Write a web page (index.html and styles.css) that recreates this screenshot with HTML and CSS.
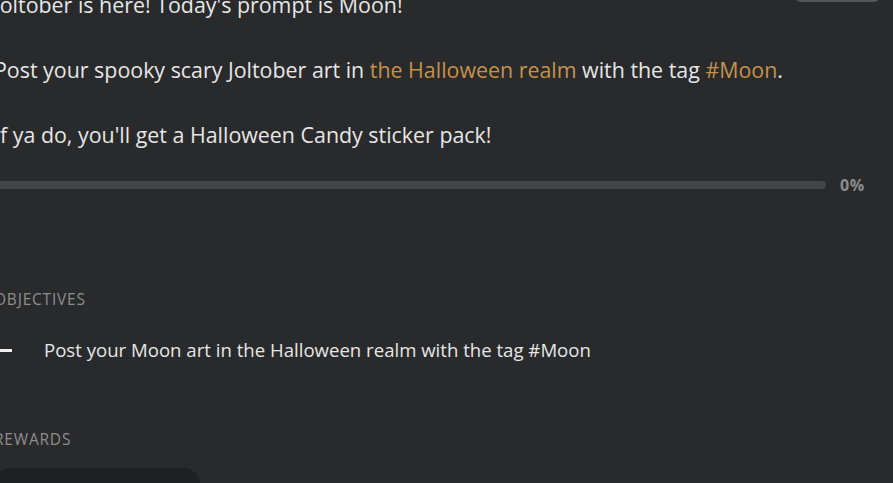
FILE: index.html
```html
<!DOCTYPE html>
<html lang="en">
<head>
<meta charset="utf-8">
<title>Joltober Quest</title>
<link rel="stylesheet" href="styles.css">
</head>
<body>
<div class="page">
  <div class="top-row"><button class="top-btn" type="button">Accept</button></div>
  <div class="desc">
    <p>Joltober is here! Today's prompt is Moon!</p>
    <p>Post your spooky scary Joltober art in <a href="#">the Halloween realm</a> with the tag <a href="#">#Moon</a>.</p>
    <p>If ya do, you'll get a Halloween Candy sticker pack!</p>
  </div>
  <div class="progress">
    <div class="track"></div>
    <span class="pct">0%</span>
  </div>
  <h4 class="section-title objectives-title">Objectives</h4>
  <div class="objective">
    <span class="dash"></span>
    <span class="obj-text">Post your Moon art in the Halloween realm with the tag #Moon</span>
  </div>
  <h4 class="section-title rewards-title">Rewards</h4>
  <div class="reward-card"></div>
</div>
</body>
</html>
```

FILE: styles.css
```css
html, body {
  margin: 0;
  padding: 0;
  background: #292a2c;
  overflow: hidden;
  height: 100%;
}
body {
  font-family: "Open Sans", "Noto Sans", sans-serif;
  color: #e6e6e6;
}
.page {
  margin-left: -6px;
  margin-top: -40px;
  padding-right: 28px;
  display: flex;
  flex-direction: column;
}
.top-row {
  display: flex;
  justify-content: flex-end;
  margin-right: -15px;
  height: 0;
}
.top-btn {
  width: 85px;
  height: 42px;
  background: transparent;
  border: 2px solid #55565a;
  border-radius: 6px;
  color: transparent;
  font: inherit;
}
.desc {
  display: flex;
  flex-direction: column;
  gap: 33px;
  margin-top: 29px;
}
.desc p {
  margin: 0;
  font-size: 21.4px;
  line-height: 32px;
}
.desc a {
  color: #c7914b;
  text-decoration: none;
}
.progress {
  display: flex;
  align-items: center;
  gap: 14px;
  margin-top: 23px;
}
.track {
  flex: 1;
  height: 8px;
  border-radius: 4px;
  background: #444547;
}
.pct {
  font-size: 16px;
  font-weight: 700;
  letter-spacing: 0.5px;
  color: #8c8c8c;
  width: 25px;
}
.section-title {
  margin: 0;
  font-size: 15.5px;
  letter-spacing: 0.8px;
  font-weight: 400;
  text-transform: uppercase;
  color: #8e8e8e;
  line-height: 20px;
}
.objectives-title {
  margin-top: 93px;
}
.objective {
  display: flex;
  align-items: center;
  margin-top: 27px;
  padding-left: 6px;
}
.dash {
  width: 12px;
  height: 3px;
  background: #f0f0f0;
  flex: none;
}
.obj-text {
  margin-left: 32px;
  font-size: 18.6px;
  line-height: 28px;
  color: #e6e6e6;
}
.rewards-title {
  margin-top: 65px;
}
.reward-card {
  margin-top: 19px;
  width: 206px;
  height: 80px;
  background: #1f2022;
  border-radius: 16px;
}
```
